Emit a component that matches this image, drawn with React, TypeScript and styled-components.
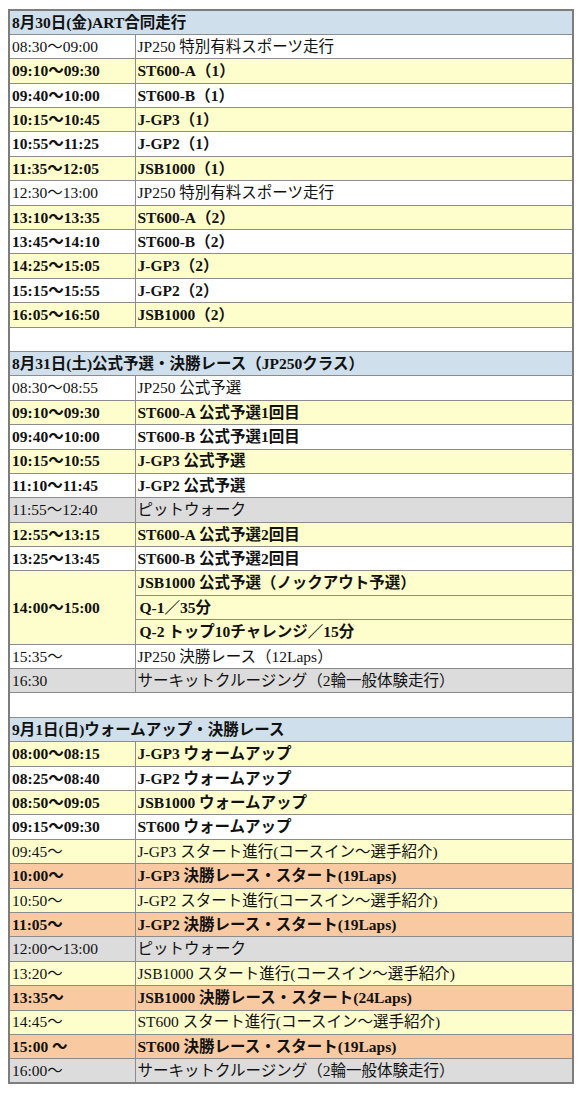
import React from "react";
import styled, { createGlobalStyle } from "styled-components";

const Global = createGlobalStyle`
  html, body { margin: 0; padding: 0; background: #ffffff; }
  body { font-family: "Liberation Serif", "Noto Sans CJK JP", serif; color: #111; }
`;

const Page = styled.div`
  padding: 9px 6px 10px 8px;
`;

const Table = styled.table`
  width: 566px;
  border-collapse: collapse;
  border: 2px solid #7d7d7d;
  table-layout: fixed;
  font-size: 15.5px;
  line-height: 1;
`;

type Tone = "white" | "yellow" | "orange" | "gray" | "blue";

const bg: Record<Tone, string> = {
  white: "#ffffff",
  yellow: "#fefdcc",
  orange: "#f9caa2",
  gray: "#dcdcdc",
  blue: "#cfdfeb",
};

const Cell = styled.td<{ $tone: Tone; $bold?: boolean; $indent?: boolean }>`
  background: ${(p) => bg[p.$tone]};
  font-weight: ${(p) => (p.$bold ? 700 : 400)};
  border: 1px solid #8c8c8c;
  height: 24.4px;
  padding: 0 0 0 ${(p) => (p.$indent ? "4px" : "2px")};
  white-space: nowrap;
  vertical-align: middle;
  box-sizing: border-box;
`;

const TimeCell = styled(Cell)`
  width: 126px;
`;

type Row = { t: string; d: string; tone: Tone; bold: boolean };

const s1: Row[] = [
  { t: "08:30〜09:00", d: "JP250 特別有料スポーツ走行", tone: "white", bold: false },
  { t: "09:10〜09:30", d: "ST600-A（1）", tone: "yellow", bold: true },
  { t: "09:40〜10:00", d: "ST600-B（1）", tone: "white", bold: true },
  { t: "10:15〜10:45", d: "J-GP3（1）", tone: "yellow", bold: true },
  { t: "10:55〜11:25", d: "J-GP2（1）", tone: "white", bold: true },
  { t: "11:35〜12:05", d: "JSB1000（1）", tone: "yellow", bold: true },
  { t: "12:30〜13:00", d: "JP250 特別有料スポーツ走行", tone: "white", bold: false },
  { t: "13:10〜13:35", d: "ST600-A（2）", tone: "yellow", bold: true },
  { t: "13:45〜14:10", d: "ST600-B（2）", tone: "white", bold: true },
  { t: "14:25〜15:05", d: "J-GP3（2）", tone: "yellow", bold: true },
  { t: "15:15〜15:55", d: "J-GP2（2）", tone: "white", bold: true },
  { t: "16:05〜16:50", d: "JSB1000（2）", tone: "yellow", bold: true },
];

const s2a: Row[] = [
  { t: "08:30〜08:55", d: "JP250 公式予選", tone: "white", bold: false },
  { t: "09:10〜09:30", d: "ST600-A 公式予選1回目", tone: "yellow", bold: true },
  { t: "09:40〜10:00", d: "ST600-B 公式予選1回目", tone: "white", bold: true },
  { t: "10:15〜10:55", d: "J-GP3 公式予選", tone: "yellow", bold: true },
  { t: "11:10〜11:45", d: "J-GP2 公式予選", tone: "white", bold: true },
  { t: "11:55〜12:40", d: "ピットウォーク", tone: "gray", bold: false },
  { t: "12:55〜13:15", d: "ST600-A 公式予選2回目", tone: "yellow", bold: true },
  { t: "13:25〜13:45", d: "ST600-B 公式予選2回目", tone: "white", bold: true },
];

const s2b: Row[] = [
  { t: "15:35〜", d: "JP250 決勝レース（12Laps）", tone: "white", bold: false },
  { t: "16:30", d: "サーキットクルージング（2輪一般体験走行）", tone: "gray", bold: false },
];

const s3: Row[] = [
  { t: "08:00〜08:15", d: "J-GP3 ウォームアップ", tone: "yellow", bold: true },
  { t: "08:25〜08:40", d: "J-GP2 ウォームアップ", tone: "white", bold: true },
  { t: "08:50〜09:05", d: "JSB1000 ウォームアップ", tone: "yellow", bold: true },
  { t: "09:15〜09:30", d: "ST600 ウォームアップ", tone: "white", bold: true },
  { t: "09:45〜", d: "J-GP3 スタート進行(コースイン〜選手紹介)", tone: "yellow", bold: false },
  { t: "10:00〜", d: "J-GP3 決勝レース・スタート(19Laps)", tone: "orange", bold: true },
  { t: "10:50〜", d: "J-GP2 スタート進行(コースイン〜選手紹介)", tone: "yellow", bold: false },
  { t: "11:05〜", d: "J-GP2 決勝レース・スタート(19Laps)", tone: "orange", bold: true },
  { t: "12:00〜13:00", d: "ピットウォーク", tone: "gray", bold: false },
  { t: "13:20〜", d: "JSB1000 スタート進行(コースイン〜選手紹介)", tone: "yellow", bold: false },
  { t: "13:35〜", d: "JSB1000 決勝レース・スタート(24Laps)", tone: "orange", bold: true },
  { t: "14:45〜", d: "ST600 スタート進行(コースイン〜選手紹介)", tone: "yellow", bold: false },
  { t: "15:00 〜", d: "ST600 決勝レース・スタート(19Laps)", tone: "orange", bold: true },
  { t: "16:00〜", d: "サーキットクルージング（2輪一般体験走行）", tone: "gray", bold: false },
];

const Rows = ({ rows }: { rows: Row[] }) => (
  <>
    {rows.map((r, i) => (
      <tr key={i}>
        <TimeCell $tone={r.tone} $bold={r.bold}>{r.t}</TimeCell>
        <Cell $tone={r.tone} $bold={r.bold}>{r.d}</Cell>
      </tr>
    ))}
  </>
);

const DayHeader = ({ children }: { children: React.ReactNode }) => (
  <tr>
    <Cell $tone="blue" $bold colSpan={2}>{children}</Cell>
  </tr>
);

const Blank = () => (
  <tr>
    <Cell $tone="white" colSpan={2} />
  </tr>
);

export default function App() {
  return (
    <Page>
      <Global />
      <Table>
        <colgroup>
          <col style={{ width: 126 }} />
          <col />
        </colgroup>
        <tbody>
          <DayHeader>8月30日(金)ART合同走行</DayHeader>
          <Rows rows={s1} />
          <Blank />
          <DayHeader>8月31日(土)公式予選・決勝レース（JP250クラス）</DayHeader>
          <Rows rows={s2a} />
          <tr>
            <TimeCell $tone="yellow" $bold rowSpan={3}>14:00〜15:00</TimeCell>
            <Cell $tone="yellow" $bold>JSB1000 公式予選（ノックアウト予選）</Cell>
          </tr>
          <tr>
            <Cell $tone="yellow" $bold $indent>Q-1／35分</Cell>
          </tr>
          <tr>
            <Cell $tone="yellow" $bold $indent>Q-2 トップ10チャレンジ／15分</Cell>
          </tr>
          <Rows rows={s2b} />
          <Blank />
          <DayHeader>9月1日(日)ウォームアップ・決勝レース</DayHeader>
          <Rows rows={s3} />
        </tbody>
      </Table>
    </Page>
  );
}
